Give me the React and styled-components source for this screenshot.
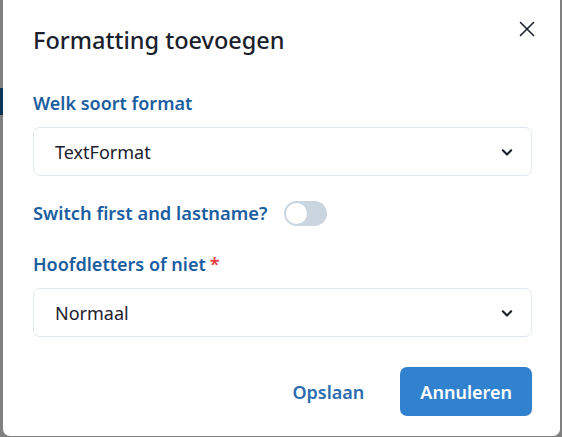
import React, { useState } from 'react';
import styled, { createGlobalStyle } from 'styled-components';

const GlobalStyle = createGlobalStyle`
  html, body {
    margin: 0;
    padding: 0;
    overflow: hidden;
  }
  body {
    background: #7f7f7f;
    font-family: "Noto Sans", "Open Sans", sans-serif;
  }
`;

const Page = styled.div`
  display: flex;
  width: 562px;
  height: 437px;
  overflow: hidden;
  background: #808080;
`;

const Backdrop = styled.div`
  flex: 0 0 3px;
  display: flex;
  flex-direction: column;
`;

const BackdropMark = styled.div`
  margin-top: 88px;
  height: 27px;
  background: #0d3557;
`;

const Modal = styled.section`
  position: relative;
  flex: 0 0 557px;
  margin-top: -6px;
  height: 442px;
  box-sizing: border-box;
  background: #fff;
  border-radius: 7px;
  padding: 30px 28px 0 30px;
  display: flex;
  flex-direction: column;
`;

const Title = styled.h2`
  margin: 0;
  font-size: 23.5px;
  line-height: 32px;
  font-weight: 500;
  color: #1a202c;
`;

const CloseButton = styled.button`
  position: absolute;
  top: 21px;
  right: 19px;
  width: 28px;
  height: 28px;
  border: none;
  background: transparent;
  padding: 0;
  display: flex;
  align-items: center;
  justify-content: center;
  cursor: pointer;
`;

const Body = styled.div`
  margin-top: 33px;
  display: flex;
  flex-direction: column;
`;

const Label = styled.label`
  display: block;
  font-size: 18px;
  line-height: 28px;
  font-weight: 600;
  color: #1b5e9f;
  margin-top: ${(p) => p.$mt || 0}px;
  margin-bottom: 10px;
`;

const Required = styled.span`
  color: #e53e3e;
  margin-left: 4px;
`;

const SelectBox = styled.div`
  height: 49px;
  box-sizing: border-box;
  border: 1px solid #e2e8f0;
  border-radius: 7px;
  display: flex;
  align-items: center;
  justify-content: space-between;
  padding: 0 14px 0 21px;
  font-size: 18px;
  color: #1a202c;
`;

const SwitchRow = styled.div`
  margin-top: 23px;
  height: 28px;
  display: flex;
  align-items: center;
  gap: 17px;
`;

const SwitchLabel = styled.span`
  font-size: 18.3px;
  line-height: 28px;
  font-weight: 600;
  color: #1b5e9f;
`;

const Track = styled.button`
  width: 43px;
  height: 25px;
  border: none;
  border-radius: 13px;
  padding: 2px;
  box-sizing: border-box;
  background: ${(p) => (p.$on ? '#3182ce' : '#cbd5e0')};
  display: flex;
  justify-content: ${(p) => (p.$on ? 'flex-end' : 'flex-start')};
  cursor: pointer;
`;

const Thumb = styled.span`
  width: 21px;
  height: 21px;
  border-radius: 50%;
  background: #fff;
`;

const Footer = styled.div`
  margin-top: 30px;
  display: flex;
  justify-content: flex-end;
  gap: 16px;
`;

const Button = styled.button`
  height: 49px;
  padding: 0 20px;
  border: none;
  border-radius: 7px;
  font-family: inherit;
  font-size: 18px;
  font-weight: 600;
  cursor: pointer;
  background: ${(p) => (p.$primary ? '#3182ce' : 'transparent')};
  color: ${(p) => (p.$primary ? '#fff' : '#2b6cb0')};
`;

function Chevron() {
  return (
    <svg width="20" height="20" viewBox="0 0 24 24" fill="none" stroke="#1a202c" strokeWidth="2.6" strokeLinecap="round" strokeLinejoin="round">
      <polyline points="7 10 12 15 17 10" />
    </svg>
  );
}

function App() {
  const [switched, setSwitched] = useState(false);

  return (
    <>
      <GlobalStyle />
      <Page>
        <Backdrop>
          <BackdropMark />
        </Backdrop>
        <Modal>
          <Title>Formatting toevoegen</Title>
          <CloseButton aria-label="Close">
            <svg width="16" height="16" viewBox="0 0 16 16" stroke="#1a202c" strokeWidth="1.6" strokeLinecap="round">
              <line x1="1.5" y1="1.5" x2="14.5" y2="14.5" />
              <line x1="14.5" y1="1.5" x2="1.5" y2="14.5" />
            </svg>
          </CloseButton>
          <Body>
            <Label>Welk soort format</Label>
            <SelectBox>
              <span>TextFormat</span>
              <Chevron />
            </SelectBox>
            <SwitchRow>
              <SwitchLabel>Switch first and lastname?</SwitchLabel>
              <Track $on={switched} onClick={() => setSwitched((v) => !v)}>
                <Thumb />
              </Track>
            </SwitchRow>
            <Label $mt={23}>
              Hoofdletters of niet<Required>*</Required>
            </Label>
            <SelectBox>
              <span>Normaal</span>
              <Chevron />
            </SelectBox>
          </Body>
          <Footer>
            <Button>Opslaan</Button>
            <Button $primary>Annuleren</Button>
          </Footer>
        </Modal>
      </Page>
    </>
  );
}

export default App;
